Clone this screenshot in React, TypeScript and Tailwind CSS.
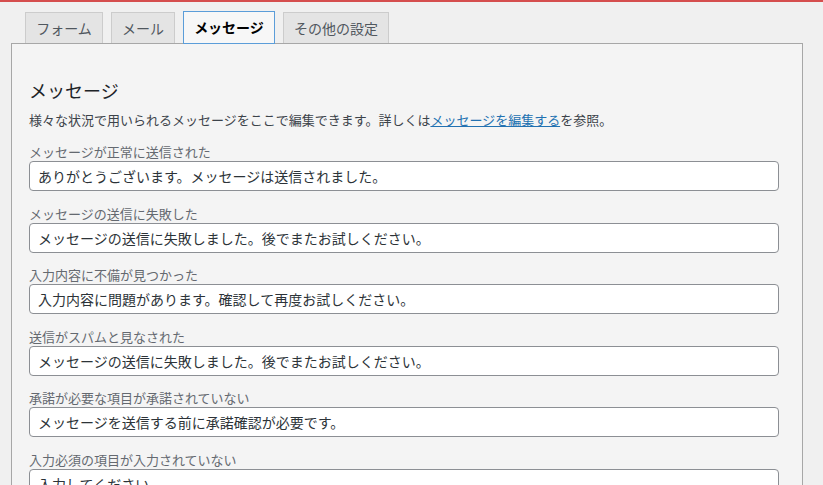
import React from "react";

const tabs = [
  { label: "フォーム", active: false, w: "w-[78px]" },
  { label: "メール", active: false, w: "w-[64px]" },
  { label: "メッセージ", active: true, w: "w-[92px]" },
  { label: "その他の設定", active: false, w: "w-[106px]" },
];

const messages = [
  { label: "メッセージが正常に送信された", value: "ありがとうございます。メッセージは送信されました。", gap: "mt-[14px]" },
  { label: "メッセージの送信に失敗した", value: "メッセージの送信に失敗しました。後でまたお試しください。", gap: "mt-[14px]" },
  { label: "入力内容に不備が見つかった", value: "入力内容に問題があります。確認して再度お試しください。", gap: "mt-[13px]" },
  { label: "送信がスパムと見なされた", value: "メッセージの送信に失敗しました。後でまたお試しください。", gap: "mt-[14px]" },
  { label: "承諾が必要な項目が承諾されていない", value: "メッセージを送信する前に承諾確認が必要です。", gap: "mt-[13px]" },
  { label: "入力必須の項目が入力されていない", value: "入力してください。", gap: "mt-[14px]" },
];

export default function App() {
  return (
    <div
      className="h-[485px] bg-[#f0f0f0] overflow-hidden"
      style={{ fontFamily: '"Noto Sans CJK JP", "Noto Sans", sans-serif' }}
    >
      <div className="h-[2px] bg-[#d54e4e]" />
      <div className="pl-[11px] pt-[9px]">
        <div className="flex items-end gap-[8px] pl-[14px]">
          {tabs.map((t) =>
            t.active ? (
              <div
                key={t.label}
                className={`${t.w} relative z-10 h-[33px] mb-[-1px] flex items-center justify-center border border-[#5b9dd9] bg-[#f7f7f7] text-[14px] font-bold text-black`}
              >
                {t.label}
              </div>
            ) : (
              <div
                key={t.label}
                className={`${t.w} h-[31px] flex items-center justify-center border border-b-0 border-[#cccccc] bg-[#e4e4e4] text-[14px] text-[#50575e]`}
              >
                {t.label}
              </div>
            )
          )}
        </div>
        <div className="w-[792px] border border-[#a7a7a7] bg-[#f4f4f4] pl-[17px] pt-[34px] pb-10">
          <h2 className="text-[18px] leading-[24px] text-[#1d2327]">メッセージ</h2>
          <p className="mt-[9px] text-[13px] leading-[18px] text-[#3c434a]">
            様々な状況で用いられるメッセージをここで編集できます。詳しくは
            <a href="#" className="text-[#2271b1] underline">
              メッセージを編集する
            </a>
            を参照。
          </p>
          {messages.map((m) => (
            <div key={m.label} className={m.gap}>
              <div className="text-[13px] leading-[18px] text-[#646970]">{m.label}</div>
              <input
                readOnly
                value={m.value}
                className="block w-[750px] h-[30px] px-[8px] bg-white border border-[#8c8f94] rounded-[4px] text-[14px] text-[#2c3338] outline-none"
              />
            </div>
          ))}
        </div>
      </div>
    </div>
  );
}
